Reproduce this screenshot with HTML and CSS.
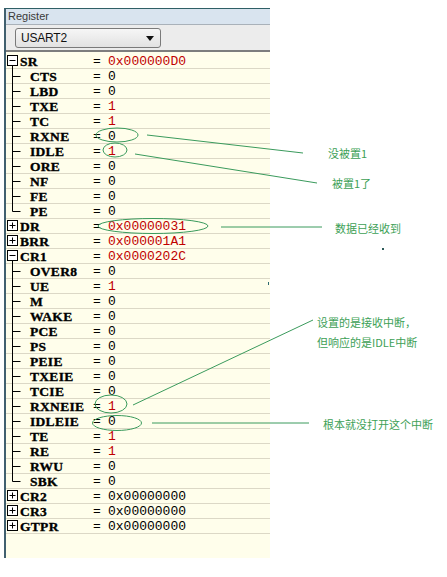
FILE: index.html
```html
<!DOCTYPE html>
<html>
<head>
<meta charset="utf-8">
<link rel="stylesheet" href="styles.css">
</head>
<body>
<svg class="defs" width="0" height="0">
  <defs>
    <g id="g-minus"><rect x="1.5" y="1.5" width="10" height="10" fill="#fff" stroke="#000"/><path d="M3.5 6.5H9.5M6.5 11.5V15" stroke="#000" fill="none"/></g>
    <g id="g-plus"><rect x="1.5" y="1.5" width="10" height="10" fill="#fff" stroke="#000"/><path d="M3.5 6.5H9.5M6.5 3.5V9.5" stroke="#000" fill="none"/></g>
    <g id="g-branch"><path d="M6.5 0V15M6.5 7.5H14.5" stroke="#000" fill="none"/></g>
    <g id="g-last"><path d="M6.5 0V7.5H14.5" stroke="#000" fill="none"/></g>
  </defs>
</svg>
<div class="panel">
  <div class="titlebar">Register</div>
  <div class="toolbar">
    <div class="combo"><span class="combo-text">USART2</span><svg class="combo-arrow" width="8" height="5" viewBox="0 0 8 5"><path d="M0 0H8L4 5Z" fill="#111"/></svg></div>
  </div>
  <div class="tree">
    <div class="row top"><svg class="tw" width="14" height="15"><use href="#g-minus"/></svg><span class="name">SR</span><span class="eq">=</span><span class="val red">0x000000D0</span></div>
    <div class="row child"><svg class="tw" width="24" height="15"><use href="#g-branch"/></svg><span class="name">CTS</span><span class="eq">=</span><span class="val">0</span></div>
    <div class="row child"><svg class="tw" width="24" height="15"><use href="#g-branch"/></svg><span class="name">LBD</span><span class="eq">=</span><span class="val">0</span></div>
    <div class="row child"><svg class="tw" width="24" height="15"><use href="#g-branch"/></svg><span class="name">TXE</span><span class="eq">=</span><span class="val red">1</span></div>
    <div class="row child"><svg class="tw" width="24" height="15"><use href="#g-branch"/></svg><span class="name">TC</span><span class="eq">=</span><span class="val red">1</span></div>
    <div class="row child"><svg class="tw" width="24" height="15"><use href="#g-branch"/></svg><span class="name">RXNE</span><span class="eq">=</span><span class="val">0</span></div>
    <div class="row child"><svg class="tw" width="24" height="15"><use href="#g-branch"/></svg><span class="name">IDLE</span><span class="eq">=</span><span class="val red">1</span></div>
    <div class="row child"><svg class="tw" width="24" height="15"><use href="#g-branch"/></svg><span class="name">ORE</span><span class="eq">=</span><span class="val">0</span></div>
    <div class="row child"><svg class="tw" width="24" height="15"><use href="#g-branch"/></svg><span class="name">NF</span><span class="eq">=</span><span class="val">0</span></div>
    <div class="row child"><svg class="tw" width="24" height="15"><use href="#g-branch"/></svg><span class="name">FE</span><span class="eq">=</span><span class="val">0</span></div>
    <div class="row child"><svg class="tw" width="24" height="15"><use href="#g-last"/></svg><span class="name">PE</span><span class="eq">=</span><span class="val">0</span></div>
    <div class="row top"><svg class="tw" width="14" height="15"><use href="#g-plus"/></svg><span class="name">DR</span><span class="eq">=</span><span class="val red">0x00000031</span></div>
    <div class="row top"><svg class="tw" width="14" height="15"><use href="#g-plus"/></svg><span class="name">BRR</span><span class="eq">=</span><span class="val red">0x000001A1</span></div>
    <div class="row top"><svg class="tw" width="14" height="15"><use href="#g-minus"/></svg><span class="name">CR1</span><span class="eq">=</span><span class="val red">0x0000202C</span></div>
    <div class="row child"><svg class="tw" width="24" height="15"><use href="#g-branch"/></svg><span class="name">OVER8</span><span class="eq">=</span><span class="val">0</span></div>
    <div class="row child"><svg class="tw" width="24" height="15"><use href="#g-branch"/></svg><span class="name">UE</span><span class="eq">=</span><span class="val red">1</span></div>
    <div class="row child"><svg class="tw" width="24" height="15"><use href="#g-branch"/></svg><span class="name">M</span><span class="eq">=</span><span class="val">0</span></div>
    <div class="row child"><svg class="tw" width="24" height="15"><use href="#g-branch"/></svg><span class="name">WAKE</span><span class="eq">=</span><span class="val">0</span></div>
    <div class="row child"><svg class="tw" width="24" height="15"><use href="#g-branch"/></svg><span class="name">PCE</span><span class="eq">=</span><span class="val">0</span></div>
    <div class="row child"><svg class="tw" width="24" height="15"><use href="#g-branch"/></svg><span class="name">PS</span><span class="eq">=</span><span class="val">0</span></div>
    <div class="row child"><svg class="tw" width="24" height="15"><use href="#g-branch"/></svg><span class="name">PEIE</span><span class="eq">=</span><span class="val">0</span></div>
    <div class="row child"><svg class="tw" width="24" height="15"><use href="#g-branch"/></svg><span class="name">TXEIE</span><span class="eq">=</span><span class="val">0</span></div>
    <div class="row child"><svg class="tw" width="24" height="15"><use href="#g-branch"/></svg><span class="name">TCIE</span><span class="eq">=</span><span class="val">0</span></div>
    <div class="row child"><svg class="tw" width="24" height="15"><use href="#g-branch"/></svg><span class="name">RXNEIE</span><span class="eq">=</span><span class="val red">1</span></div>
    <div class="row child"><svg class="tw" width="24" height="15"><use href="#g-branch"/></svg><span class="name">IDLEIE</span><span class="eq">=</span><span class="val">0</span></div>
    <div class="row child"><svg class="tw" width="24" height="15"><use href="#g-branch"/></svg><span class="name">TE</span><span class="eq">=</span><span class="val red">1</span></div>
    <div class="row child"><svg class="tw" width="24" height="15"><use href="#g-branch"/></svg><span class="name">RE</span><span class="eq">=</span><span class="val red">1</span></div>
    <div class="row child"><svg class="tw" width="24" height="15"><use href="#g-branch"/></svg><span class="name">RWU</span><span class="eq">=</span><span class="val">0</span></div>
    <div class="row child"><svg class="tw" width="24" height="15"><use href="#g-last"/></svg><span class="name">SBK</span><span class="eq">=</span><span class="val">0</span></div>
    <div class="row top"><svg class="tw" width="14" height="15"><use href="#g-plus"/></svg><span class="name">CR2</span><span class="eq">=</span><span class="val">0x00000000</span></div>
    <div class="row top"><svg class="tw" width="14" height="15"><use href="#g-plus"/></svg><span class="name">CR3</span><span class="eq">=</span><span class="val">0x00000000</span></div>
    <div class="row top"><svg class="tw" width="14" height="15"><use href="#g-plus"/></svg><span class="name">GTPR</span><span class="eq">=</span><span class="val">0x00000000</span></div>
  </div>
</div>

<svg class="overlay" width="447" height="577" viewBox="0 0 447 577">
  <g fill="none" stroke="#3a9a5c" stroke-width="1">
    <ellipse cx="117" cy="135" rx="21" ry="7"/>
    <line x1="147" y1="135" x2="303" y2="153"/>
    <ellipse cx="115" cy="150" rx="12" ry="7"/>
    <line x1="135" y1="154" x2="317" y2="183"/>
    <ellipse cx="153" cy="226" rx="55" ry="7.5"/>
    <line x1="221" y1="227" x2="322" y2="227"/>
    <ellipse cx="111" cy="404" rx="16" ry="9"/>
    <line x1="133" y1="405" x2="313" y2="320"/>
    <ellipse cx="117" cy="423" rx="24.5" ry="7.5"/>
    <line x1="152" y1="423" x2="309" y2="423"/>
  </g>
  <rect x="382" y="248" width="2" height="2" fill="#2d5a58"/>
  <rect x="268" y="282" width="1" height="3" fill="#2d6a70"/>
</svg>
<div class="note n1">没被置1</div>
<div class="note n2">被置1了</div>
<div class="note n3">数据已经收到</div>
<div class="note n4">设置的是接收中断，<br>但响应的是IDLE中断</div>
<div class="note n5">根本就没打开这个中断</div>
</body>
</html>
```
FILE: styles.css
```css
html, body {
  margin: 0;
  padding: 0;
}
body {
  width: 447px;
  height: 577px;
  position: relative;
  overflow: hidden;
  background: #ffffff;
  font-family: "Liberation Sans", Arial, sans-serif;
}
.defs {
  position: absolute;
  width: 0;
  height: 0;
}
.panel {
  margin: 8px 0 0 4px;
  width: 266px;
  height: 550px;
  box-sizing: border-box;
  border-top: 1px solid #2f5f66;
  border-left: 2px solid #41606f;
  display: flex;
  flex-direction: column;
}
.titlebar {
  height: 15px;
  line-height: 15px;
  background: #d9e4ef;
  border-bottom: 1px solid #a9b1b9;
  color: #3a3a3a;
  font-size: 11px;
  padding-left: 2px;
}
.toolbar {
  height: 25px;
  background: #ececec;
  border-bottom: 2px solid #7d7d7d;
  display: flex;
  align-items: center;
  padding-left: 9px;
}
.combo {
  width: 146px;
  height: 20px;
  box-sizing: border-box;
  border: 1px solid #7a7a7a;
  border-radius: 3px;
  background: linear-gradient(#f6f6f6, #e2e2e2);
  display: flex;
  align-items: center;
  justify-content: space-between;
  padding: 0 6px 0 5px;
}
.combo-text {
  font-size: 12px;
  color: #111;
  letter-spacing: -0.2px;
}
.combo-arrow {
  display: block;
  margin-top: 1px;
}
.tree {
  flex: 1;
  background: #fffeeb;
  padding-top: 2px;
}
.row {
  height: 15px;
  display: flex;
  align-items: center;
  background-image: linear-gradient(#dcd8c6, #dcd8c6);
  background-repeat: no-repeat;
  background-position: left bottom;
  background-size: 100% 1px;
}
.tw {
  display: block;
  flex: none;
  overflow: visible;
}
.name {
  font-family: "Liberation Serif", "Times New Roman", serif;
  font-weight: bold;
  font-size: 13.5px;
  letter-spacing: 0.3px;
  -webkit-text-stroke: 0.35px #000;
  color: #000;
  line-height: 15px;
  flex: none;
}
.top .name {
  width: 73px;
}
.child .name {
  width: 63px;
}
.eq, .val {
  font-family: "Liberation Mono", "Courier New", monospace;
  font-size: 13px;
  line-height: 15px;
  color: #000;
}
.eq {
  width: 15px;
  flex: none;
}
.val.red {
  color: #c00000;
}
.overlay {
  position: absolute;
  left: 0;
  top: 0;
  pointer-events: none;
}
.note {
  position: absolute;
  font-family: "Noto Sans CJK SC", "Noto Sans", sans-serif;
  font-size: 11px;
  line-height: 20px;
  color: #3d9f56;
  white-space: nowrap;
}
.n1 { left: 328px; top: 143px; }
.n2 { left: 332px; top: 173px; }
.n3 { left: 335px; top: 218px; }
.n4 { left: 317px; top: 312px; }
.n5 { left: 323px; top: 414px; }
```
